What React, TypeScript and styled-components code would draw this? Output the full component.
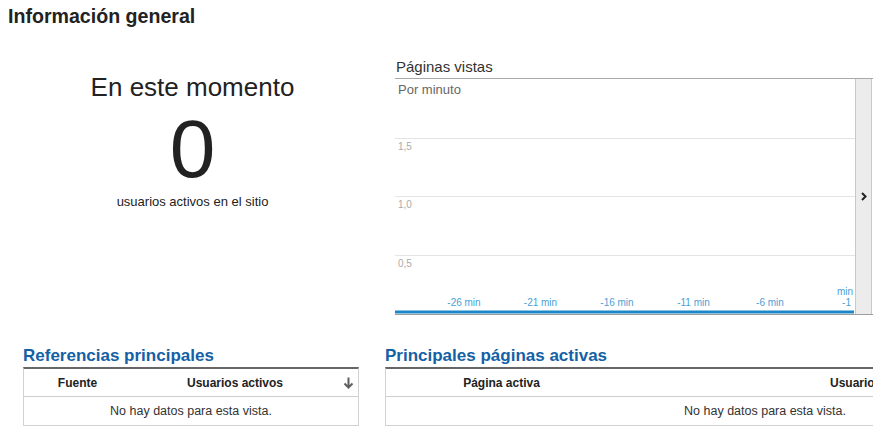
import React from "react";
import styled, { createGlobalStyle } from "styled-components";

const GlobalStyle = createGlobalStyle`
  html, body {
    margin: 0;
    padding: 0;
    background: #fff;
  }
  body {
    font-family: "Liberation Sans", Arial, sans-serif;
    color: #222;
    overflow: hidden;
  }
`;

const Page = styled.div`
  width: 873px;
  height: 440px;
  overflow: hidden;
  box-sizing: border-box;
  padding: 5px 0 0 8px;
`;

const Title = styled.h1`
  margin: 0;
  font-size: 19.6px;
  line-height: 22px;
  font-weight: bold;
  color: #222;
`;

const TopRow = styled.div`
  display: flex;
  align-items: flex-start;
  margin-top: 31px;
`;

// left block "right now"
const NowPanel = styled.div`
  width: 369px;
  flex-shrink: 0;
  padding-top: 14px;
  text-align: center;
  color: #222;
`;

const NowLabel = styled.div`
  font-size: 26px;
  line-height: 30px;
`;

const NowCount = styled.div`
  font-size: 82px;
  line-height: 82px;
  margin-top: 6px;
`;

const NowCaption = styled.div`
  font-size: 13px;
  line-height: 15px;
  margin-top: 4px;
`;

// chart block
const ChartSection = styled.div`
  width: 478px;
  flex-shrink: 0;
  margin-left: 18px;
`;

const ChartHeading = styled.div`
  font-size: 15px;
  line-height: 18px;
  color: #333;
  padding: 0 0 2px 1px;
  border-bottom: 1px solid #a9a9a9;
`;

const ChartBody = styled.div`
  display: flex;
  height: 235px;
  border-bottom: 1px solid #9e9e9e;
`;

const Plot = styled.svg`
  display: block;
  width: 460px;
  height: 235px;
  flex-shrink: 0;
  font-family: "Liberation Sans", Arial, sans-serif;
`;

const ScrollStrip = styled.div`
  width: 15px;
  flex-shrink: 0;
  background: #ececec;
  border-left: 1px solid #c9c9c9;
  border-right: 1px solid #c9c9c9;
  display: flex;
  align-items: center;
  justify-content: center;
`;

// tables
const BottomRow = styled.div`
  display: flex;
  align-items: flex-start;
  gap: 26px;
  margin-top: 31px;
  padding-left: 15px;
`;

const TableSection = styled.div<{ $width: number }>`
  width: ${(p) => p.$width}px;
  flex-shrink: 0;
`;

const SectionHeading = styled.h2`
  margin: 0 0 1px;
  font-size: 17px;
  line-height: 20px;
  font-weight: bold;
  color: #1461a6;
`;

const DataTable = styled.table`
  width: 100%;
  border-collapse: separate;
  border-spacing: 0;
  table-layout: fixed;
  border-top: 2px solid #666;
  border-left: 1px solid #d2d2d2;
  border-right: 1px solid #d2d2d2;
  border-bottom: 1px solid #d2d2d2;
`;

const HeadCell = styled.th`
  height: 27px;
  padding: 0;
  font-size: 12px;
  font-weight: bold;
  color: #222;
  text-align: center;
  vertical-align: middle;
  border-bottom: 1px solid #cfcfcf;
  white-space: nowrap;
`;

const EmptyCell = styled.td`
  height: 28px;
  padding: 0;
  font-size: 12.5px;
  color: #333;
  text-align: center;
  vertical-align: middle;
`;

const SortIcon = () => (
  <svg width="11" height="12" viewBox="0 0 11 12" style={{ display: "block", margin: "0 auto" }}>
    <path d="M5.5 0.5 V10.5 M1.5 6.5 L5.5 10.5 L9.5 6.5" fill="none" stroke="#5f5f5f" strokeWidth="2" />
  </svg>
);

const Chevron = () => (
  <svg width="6" height="9" viewBox="0 0 6 9">
    <path d="M1 1 L4.5 4.5 L1 8" fill="none" stroke="#222" strokeWidth="2" />
  </svg>
);

const grid = [
  { y: 59.5, label: "1,5" },
  { y: 117.5, label: "1,0" },
  { y: 176.5, label: "0,5" },
];

const ticks = [
  { x: 69, label: "-26 min" },
  { x: 145.5, label: "-21 min" },
  { x: 222, label: "-16 min" },
  { x: 298.5, label: "-11 min" },
  { x: 375, label: "-6 min" },
];

const PageviewsChart = () => (
  <Plot viewBox="0 0 460 235">
    <text x="3" y="15" fontSize="13" fill="#666">Por minuto</text>
    {grid.map((g) => (
      <g key={g.label}>
        <line x1="0" x2="460" y1={g.y} y2={g.y} stroke="#e4e4e4" strokeWidth="1" />
        <text x="3" y={g.y + 11} fontSize="10" fill="#aaa">{g.label}</text>
      </g>
    ))}
    {ticks.map((t) => (
      <text key={t.label} x={t.x} y="227" fontSize="10" fill="#4a9fd6" textAnchor="middle">
        {t.label}
      </text>
    ))}
    <text x="458" y="216" fontSize="10" fill="#4a9fd6" textAnchor="end">min</text>
    <text x="456" y="227" fontSize="10" fill="#4a9fd6" textAnchor="end">-1</text>
    <rect x="0" y="231.5" width="459" height="3" fill="#1b87c6" />
  </Plot>
);

const App: React.FC = () => {
  return (
    <Page>
      <GlobalStyle />
      <Title>Información general</Title>
      <TopRow>
        <NowPanel>
          <NowLabel>En este momento</NowLabel>
          <NowCount>0</NowCount>
          <NowCaption>usuarios activos en el sitio</NowCaption>
        </NowPanel>
        <ChartSection>
          <ChartHeading>Páginas vistas</ChartHeading>
          <ChartBody>
            <PageviewsChart />
            <ScrollStrip>
              <Chevron />
            </ScrollStrip>
          </ChartBody>
        </ChartSection>
      </TopRow>
      <BottomRow>
        <TableSection $width={336}>
          <SectionHeading>Referencias principales</SectionHeading>
          <DataTable>
            <colgroup>
              <col style={{ width: 107 }} />
              <col style={{ width: 208 }} />
              <col style={{ width: 19 }} />
            </colgroup>
            <thead>
              <tr>
                <HeadCell>Fuente</HeadCell>
                <HeadCell>Usuarios activos</HeadCell>
                <HeadCell>
                  <SortIcon />
                </HeadCell>
              </tr>
            </thead>
            <tbody>
              <tr>
                <EmptyCell colSpan={3}>No hay datos para esta vista.</EmptyCell>
              </tr>
            </tbody>
          </DataTable>
        </TableSection>
        <TableSection $width={760}>
          <SectionHeading>Principales páginas activas</SectionHeading>
          <DataTable>
            <colgroup>
              <col style={{ width: 231 }} />
              <col style={{ width: 522 }} />
              <col style={{ width: 5 }} />
            </colgroup>
            <thead>
              <tr>
                <HeadCell>Página activa</HeadCell>
                <HeadCell>Usuarios activos</HeadCell>
                <HeadCell />
              </tr>
            </thead>
            <tbody>
              <tr>
                <EmptyCell colSpan={3}>No hay datos para esta vista.</EmptyCell>
              </tr>
            </tbody>
          </DataTable>
        </TableSection>
      </BottomRow>
    </Page>
  );
};

export default App;
